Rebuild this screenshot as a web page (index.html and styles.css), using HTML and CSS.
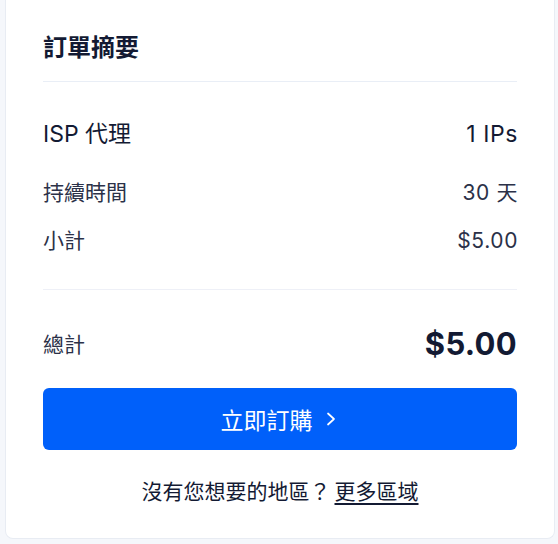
FILE: index.html
```html
<!DOCTYPE html>
<html lang="zh-Hant">
<head>
<meta charset="utf-8">
<link rel="stylesheet" href="styles.css">
</head>
<body>
<div class="card">
  <h2 class="title">訂單摘要</h2>
  <div class="divider"></div>
  <div class="row row-main">
    <span>ISP 代理</span>
    <span class="val">1 IPs</span>
  </div>
  <div class="row row-sub row-duration">
    <span>持續時間</span>
    <span class="val">30 天</span>
  </div>
  <div class="row row-sub row-subtotal">
    <span>小計</span>
    <span class="val">$5.00</span>
  </div>
  <div class="divider divider-2"></div>
  <div class="row row-total">
    <span class="total-label">總計</span>
    <span class="total-value">$5.00</span>
  </div>
  <button class="buy">立即訂購
    <svg class="chev" width="10" height="18" viewBox="0 0 10 18"><path d="M2 3.5 L8 9 L2 14.5" fill="none" stroke="#fff" stroke-width="1.7" stroke-linecap="round" stroke-linejoin="round"/></svg>
  </button>
  <p class="more">沒有您想要的地區？<a class="more-link">更多區域</a></p>
</div>
</body>
</html>
```

FILE: styles.css
```css
* { box-sizing: border-box; }
html, body { margin: 0; }
body {
  background: #f5f7fb;
  padding: 0 3px 5px 5px;
  font-family: Inter, "Noto Sans CJK TC", sans-serif;
  color: #131a33;
  height: 544px;
  overflow: hidden;
}
.card {
  width: 550px;
  background: #fff;
  border: 1px solid #e8ecf3;
  border-top: none;
  border-radius: 0 0 8px 8px;
  padding: 32px 37px 32px 37px;
}
.title {
  margin: 0;
  font-size: 24px;
  line-height: 32px;
  font-weight: 700;
}
.divider {
  height: 1px;
  background: #e9eef6;
  margin-top: 17px;
}
.row {
  display: flex;
  justify-content: space-between;
  align-items: center;
}
.row-main {
  margin-top: 36px;
  font-size: 23px;
  line-height: 32px;
}
.val { letter-spacing: 0.6px; margin-right: -1px; }
.row-sub {
  font-size: 21px;
  line-height: 28px;
  color: #2b3148;
}
.row-duration { margin-top: 29px; }
.row-subtotal { margin-top: 20px; }
.divider-2 { margin-top: 34px; background: #eef0f7; }
.row-total {
  margin-top: 33px;
  height: 40px;
}
.total-label {
  font-size: 21px;
  color: #2b3148;
}
.total-value {
  font-size: 31px;
  font-weight: 700;
  letter-spacing: 0.3px;
}
.buy {
  display: flex;
  align-items: center;
  justify-content: center;
  gap: 13px;
  width: 100%;
  height: 62px;
  margin-top: 25px;
  border: none;
  border-radius: 6px;
  background: #0060fa;
  color: #fff;
  font-family: Inter, "Noto Sans CJK TC", sans-serif;
  font-size: 23px;
  padding: 0 4px 0 0;
}
.chev { display: block; }
.more {
  margin: 28px 0 0;
  text-align: center;
  font-size: 21px;
  line-height: 28px;
  color: #131a33;
}
.more-link {
  text-decoration: underline;
  text-underline-offset: 4px;
  margin-left: 4px;
}
```
